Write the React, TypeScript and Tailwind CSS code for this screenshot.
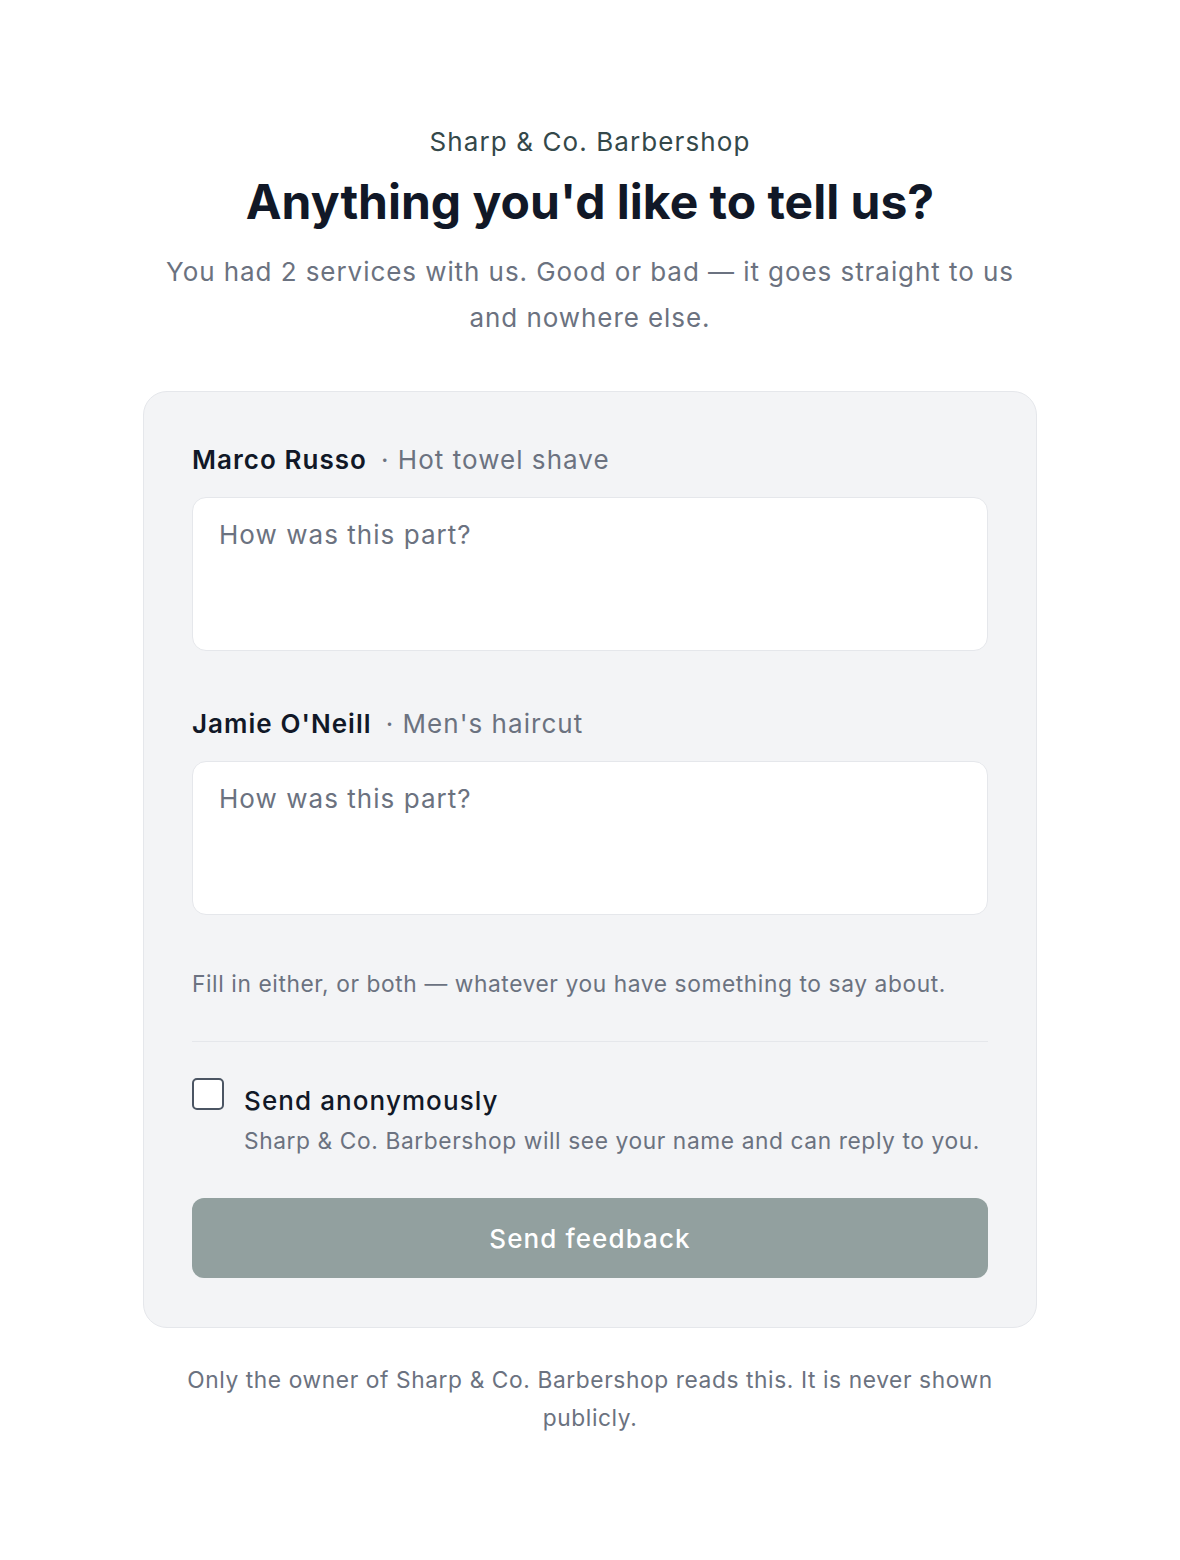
import React from "react";

const services = [
  { barber: "Marco Russo", service: "Hot towel shave" },
  { barber: "Jamie O'Neill", service: "Men's haircut" },
];

const App: React.FC = () => {
  return (
    <div
      className="min-h-screen bg-white flex flex-col items-center pt-[124px] pb-[120px]"
      style={{ fontFamily: "Inter, 'Noto Sans', sans-serif" }}
    >
      {/* Header */}
      <p className="text-[26px] leading-[36px] tracking-[0.042em] text-[#34484a]">Sharp &amp; Co. Barbershop</p>
      <h1 className="mt-[14px] text-[48px] leading-[56px] font-bold text-[#111827]">
        Anything you'd like to tell us?
      </h1>
      <p className="mt-[19px] max-w-[860px] text-center text-[26px] leading-[46px] tracking-[0.036em] text-[#6b7280]">
        You had 2 services with us. Good or bad — it goes straight to us and nowhere else.
      </p>

      {/* Card */}
      <div className="mt-[50px] w-[894px] rounded-[24px] border border-[#e5e7eb] bg-[#f3f4f6] px-[48px] pt-[48px] pb-[49px]">
        <div className="flex flex-col gap-[53px]">
          {services.map((s) => (
            <div key={s.barber}>
              <label className="flex items-center text-[26px] leading-[40px] tracking-[0.04em]">
                <span className="font-semibold text-[#111827]">{s.barber}</span>
                <span className="ml-[14px] text-[#6b7280]">· {s.service}</span>
              </label>
              <textarea
                placeholder="How was this part?"
                className="mt-[17px] block w-full h-[154px] resize-none rounded-[14px] border border-[#e5e7eb] bg-white px-[26px] py-[18px] text-[26px] leading-[38px] tracking-[0.04em] text-[#111827] placeholder:text-[#6b7280] outline-none"
              />
            </div>
          ))}
        </div>

        <p className="mt-[51px] text-[22.75px] leading-[36px] tracking-[0.026em] text-[#6b7280]">
          Fill in either, or both — whatever you have something to say about.
        </p>

        <div className="mt-[39px] h-px bg-[#e5e7eb]" />

        <label className="mt-[36px] flex items-start gap-[20px]">
          <span className="w-[32px] h-[32px] shrink-0 rounded-[5px] border-2 border-[#4b5563] bg-white" />
          <span className="flex flex-col pt-[3px]">
            <span className="text-[26px] leading-[40px] tracking-[0.042em] font-medium text-[#111827]">Send anonymously</span>
            <span className="mt-[3px] text-[22.75px] leading-[34px] tracking-[0.026em] text-[#6b7280]">
              Sharp &amp; Co. Barbershop will see your name and can reply to you.
            </span>
          </span>
        </label>

        <button
          disabled
          className="mt-[40px] w-full h-[80px] rounded-[12px] bg-[#92a09f] text-[26px] tracking-[0.042em] font-medium text-white"
        >
          Send feedback
        </button>
      </div>

      {/* Footer */}
      <p className="mt-[33px] max-w-[850px] text-center text-[22.75px] leading-[38px] tracking-[0.026em] text-[#6b7280]">
        Only the owner of Sharp &amp; Co. Barbershop reads this. It is never shown publicly.
      </p>
    </div>
  );
};

export default App;
